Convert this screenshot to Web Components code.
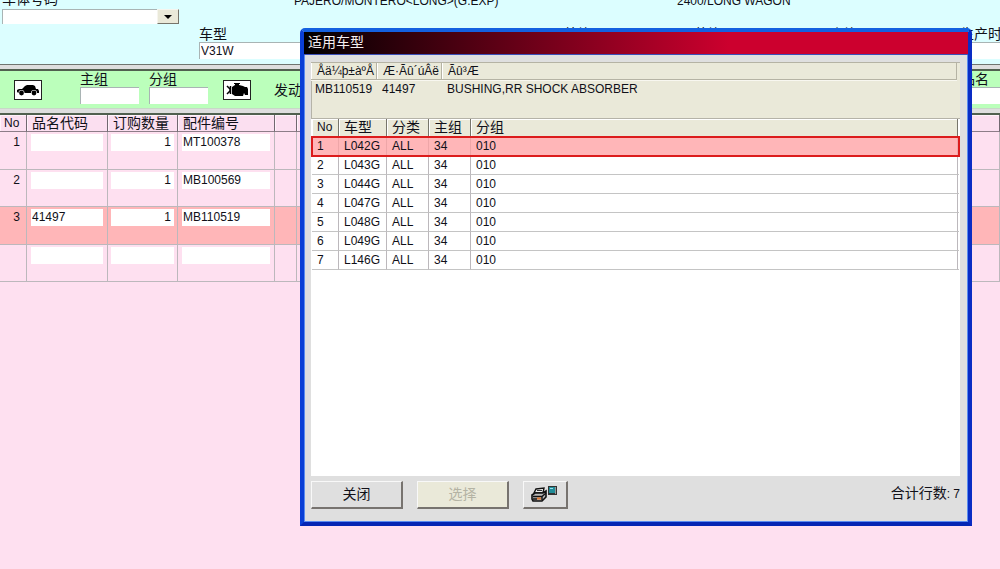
<!DOCTYPE html>
<html lang="zh-CN">
<head>
<meta charset="utf-8">
<title>适用车型</title>
<style>
  html, body { height: 100%; }
  body {
    margin: 0; overflow: hidden; background: #fee0f0; color: #101018;
    font: 12px/16px "Liberation Sans", "Noto Sans CJK SC", sans-serif;
    --cjk: 14px/16px "Liberation Sans", "Noto Sans CJK SC", sans-serif;
    --sand: #eae9d9; --silver: #dfdfdf; --rule: #bcb8bc;
  }
</style>
</head>
<body>
<parts-app></parts-app>
<script>
const define = (name, html, setup) => {
  const template = document.createElement('template');
  template.innerHTML = html;
  customElements.define(name, class extends HTMLElement {
    constructor() {
      super();
      this.attachShadow({ mode: 'open' }).append(template.content.cloneNode(true));
    }
    connectedCallback() { if (setup) setup(this, this.shadowRoot); }
  });
};

define('labelled-field', `
  <style>
    :host { display: block; min-width: 0; }
    label { display: block; font: var(--cjk); height: 16px; white-space: nowrap; }
    input { display: block; box-sizing: border-box; width: 100%; height: 17px; margin: 0; padding: 0 1px;
      border: solid #a9b4b4; border-width: 1px 0 0 1px; border-radius: 0; background: #fff; font: inherit; color: inherit; }
  </style>
  <label for="f"></label><input id="f" type="text">`,
  (host, root) => {
    root.querySelector('label').textContent = host.getAttribute('label');
    root.querySelector('input').value = host.getAttribute('value') || '';
  });

define('vehicle-panel', `
  <style>
    :host { display: block; height: 64px; overflow: hidden; background: #dcfeff; }
    .top { display: grid; grid-template-columns: 292px 383px 1fr; margin-top: -9px; padding-left: 2px; white-space: nowrap; }
    .top label { font: var(--cjk); }
    .top span { padding-top: 2px; }
    .combo { position: relative; width: 177px; height: 15px; margin-left: 2px; }
    select { appearance: none; display: block; box-sizing: border-box; width: 100%; height: 100%; margin: 0; padding: 0;
      border: solid #a9b4b4; border-width: 1px 0 0 1px; border-radius: 0; background: #fff; font: inherit; }
    .arrow { position: absolute; right: 0; top: 0; width: 22px; height: 15px; box-sizing: border-box; pointer-events: none;
      background: var(--sand); border: 1px solid; border-color: #f6f5ee #77746a #77746a #f6f5ee; display: grid; place-items: center; }
    .row { display: grid; grid-template-columns: 151fr 214fr 130fr 136fr 130fr 40px; margin: 2px 0 0 199px; }
  </style>
  <div class="top"><label for="vin">车体号码</label><span>PAJERO/MONTERO&lt;LONG&gt;(G.EXP)</span><span>2400/LONG WAGON</span></div>
  <div class="combo"><select id="vin"><option></option></select>
    <span class="arrow"><svg width="8" height="4"><path d="M0 0H8L4 4Z"/></svg></span></div>
  <div class="row">
    <labelled-field label="车型" value="V31W"></labelled-field>
    <labelled-field label=""></labelled-field>
    <labelled-field label="外饰"></labelled-field>
    <labelled-field label="装饰"></labelled-field>
    <labelled-field label="内饰"></labelled-field>
    <labelled-field label="生产时间"></labelled-field>
  </div>`);

define('split-bar', `
  <style>:host { display: block; box-sizing: border-box; height: 7px; background: #dedede;
    border-top: 1px solid var(--top, #707570); border-bottom: 2px solid #50604f; }</style>`);

define('group-bar', `
  <style>
    :host { display: flex; align-items: flex-start; height: 37px; box-sizing: border-box; padding-left: 14px; background: #bbffbb; }
    button { flex: none; width: 28px; height: 20px; margin: 9px 0 0; padding: 0; border: 1px solid #222; border-radius: 0;
      background: #fff; display: grid; place-items: center; }
    labelled-field { flex: none; width: 59px; margin-right: 10px; }
    .first { margin-left: 38px; }
    .engine { margin-left: 5px; margin-right: 23px; }
    .text { font: var(--cjk); margin-top: 11px; flex: 1; white-space: nowrap; }
    .last { width: 39px; margin: 0; }
  </style>
  <button aria-label="车型"><svg width="24" height="14" viewBox="0 0 24 14"><path d="M1 9V7L3 6H6L9 3L11 2H17L19 3L20 6L22 6L23 8V10H21A3 3 0 0 0 15 10H8.500A3 3 0 0 0 2.500 10Z"/><circle cx="5.500" cy="10" r="2.400"/><circle cx="18" cy="10" r="2.400"/></svg></button>
  <labelled-field class="first" label="主组"></labelled-field>
  <labelled-field label="分组"></labelled-field>
  <button class="engine" aria-label="发动机"><svg width="24" height="16" viewBox="0 0 24 16"><path d="M7 5L10 3V2H9V1H15V2H14V3L18 4L20 5H22L23 7V13H20L19 11L18 14H10L7 12Z"/><path d="M2 4L5 7V9L2 12M5.500 4V12" fill="none" stroke="#000" stroke-width="1.500"/></svg></button>
  <span class="text">发动机</span>
  <labelled-field class="last" label="品名"></labelled-field>`);

define('order-table', `
  <style>
    :host { display: block; }
    table { width: 100%; border-collapse: separate; border-spacing: 0; table-layout: fixed; }
    th { box-sizing: border-box; height: 17px; padding: 0 0 0 5px; text-align: left; font: var(--cjk); white-space: nowrap;
      background: #fbdff0; border-right: 1px solid #706870; border-bottom: 1px solid #8d7d88; box-shadow: inset 1px 1px #fff2fa; }
    th:first-child { font: inherit; padding-left: 4px; }
    td { box-sizing: border-box; height: 37px; padding: 2px 4px 0; vertical-align: top; border-right: 1px solid var(--rule); border-bottom: 1px solid var(--rule); }
    tr:nth-child(odd) td { height: 38px; }
    td:first-child { text-align: right; padding: 2px 6px 0 0; }
    td:nth-child(3) { padding: 2px 3px 0; }
    input { display: block; box-sizing: border-box; width: 100%; height: 17px; margin: 0; padding: 0 1px 1px; border: 0; border-radius: 0;
      background: #fff; font: inherit; color: inherit; }
    .qty { text-align: right; padding-right: 3px; }
    .on { background: #ffb6b8; }
  </style>
  <table>
    <colgroup><col style="width:27px"><col style="width:81px"><col style="width:70px"><col style="width:97px"><col style="width:22px"><col></colgroup>
    <thead><tr><th>No</th><th>品名代码</th><th>订购数量</th><th>配件编号</th><th></th><th></th></tr></thead>
    <tbody></tbody>
  </table>`,
  (host, root) => {
    const rows = [['1', '', '1', 'MT100378'], ['2', '', '1', 'MB100569'], ['3', '41497', '1', 'MB110519'], ['', '', '', '']];
    root.querySelector('tbody').innerHTML = rows.map(([no, code, qty, part]) =>
      `<tr class="${no === '3' ? 'on' : ''}"><td>${no}</td><td><input aria-label="品名代码" value="${code}"></td>` +
      `<td><input class="qty" aria-label="订购数量" value="${qty}"></td><td><input aria-label="配件编号" value="${part}"></td><td></td><td></td></tr>`).join('');
  });

define('app-window', `
  <style>
    :host { display: flex; flex-direction: column; box-sizing: border-box; background: var(--silver);
      border: 4px solid #0a3fd6; border-top-color: #1460e0; border-right-color: #0a2cc4; border-bottom-color: #0526b4;
      border-radius: 5px 5px 0 0; box-shadow: inset 0 0 0 1px #5a8cf0; }
    h1 { flex: none; margin: 0; padding: 0 4px; font: var(--cjk); line-height: 20px; height: 22px; color: #f4eef0;
      background: linear-gradient(90deg, #000, #cc002e 64%); border-bottom: 1px solid #3c50b8; }
    .body { flex: 1; display: flex; flex-direction: column; min-height: 0; padding: 7px 8px 13px 7px; }
  </style>
  <h1><slot name="title"></slot></h1><div class="body"><slot></slot></div>`);

define('part-info', `
  <style>
    :host { display: block; flex: none; height: 56px; background: var(--sand); box-shadow: inset 1px 1px #b5b3a8; padding-right: 3px; }
    table { width: 100%; border-spacing: 0; table-layout: fixed; }
    th { box-sizing: border-box; height: 18px; padding: 0 0 0 6px; text-align: left; font-weight: normal; white-space: nowrap;
      border: solid #b5b3a4; border-width: 1px 1px 1px 0; box-shadow: inset 1px 0 #fff, 0 1px #f8f7f0; }
    td { height: 16px; padding: 1px 0 0 5px; white-space: nowrap; }
    td:first-child { padding-left: 4px; }
  </style>
  <table>
    <colgroup><col style="width:66px"><col style="width:65px"><col></colgroup>
    <thead><tr><th>Åä¼þ±àºÅ</th><th>Æ·Ãû´úÂë</th><th>Ãû³Æ</th></tr></thead>
    <tbody><tr><td>MB110519</td><td>41497</td><td>BUSHING,RR SHOCK ABSORBER</td></tr></tbody>
  </table>`);

define('model-table', `
  <style>
    :host { display: block; flex: 1; min-height: 0; background: #fff; border-top: 1px solid #b5b3a8; padding: 0 1px; }
    table { width: 100%; border-spacing: 0; table-layout: fixed; }
    th { box-sizing: border-box; height: 18px; padding: 0 0 1px 5px; text-align: left; font: var(--cjk); background: var(--sand); white-space: nowrap;
      border-right: 1px solid #77756b; border-bottom: 1px solid #9c9a8e; box-shadow: inset 1px 1px #fff; }
    th:first-child { font: inherit; }
    td { box-sizing: border-box; height: 19px; padding: 0 0 0 5px; border-right: 1px solid var(--rule); border-bottom: 1px solid #c4c4c4; white-space: nowrap; }
    .end { border-right: 0; background: none; box-shadow: none; padding: 0; }
    th.end { border-bottom: 0; }
    .on td { background: #ffb6b8; border-right-color: #eea6a8; }
    .on { outline: 2px solid #dc1c1c; outline-offset: -1px; }
  </style>
  <table>
    <colgroup><col style="width:27px"><col style="width:48px"><col style="width:42px"><col style="width:42px"><col><col style="width:1px"></colgroup>
    <thead><tr><th>No</th><th>车型</th><th>分类</th><th>主组</th><th>分组</th><th class="end"></th></tr></thead>
    <tbody></tbody>
  </table>`,
  (host, root) => {
    root.querySelector('tbody').innerHTML = ['L042G', 'L043G', 'L044G', 'L047G', 'L048G', 'L049G', 'L146G'].map((model, i) =>
      `<tr class="${i ? '' : 'on'}"><td>${i + 1}</td><td>${model}</td><td>ALL</td><td>34</td><td>010</td><td class="end"></td></tr>`).join('');
  });

define('bevel-button', `
  <style>
    :host { display: block; width: 92px; }
    :host([icon]) { width: 45px; }
    button { display: grid; place-items: center; box-sizing: border-box; width: 100%; height: 28px; margin: 0; padding: 0 0 1px; font: var(--cjk); color: #101018;
      background: var(--silver); border: solid; border-width: 1px 2px 2px 1px; border-color: #f8f8f8 #77736f #77736f #f8f8f8; border-radius: 0; }
    button:disabled { background: var(--sand); color: #b4b3a4; }
  </style>
  <button><slot></slot></button>`,
  (host, root) => {
    const button = root.querySelector('button');
    button.disabled = host.hasAttribute('disabled');
    if (host.hasAttribute('icon')) button.setAttribute('aria-label', host.getAttribute('icon'));
  });

define('dialog-footer', `
  <style>
    :host { display: flex; flex: none; align-items: flex-start; gap: 14px; margin-top: 5px; }
    output { margin-left: auto; margin-top: 4px; font: var(--cjk); }
    small { font-size: 12px; }
    svg { display: block; }
  </style>
  <bevel-button>关闭</bevel-button>
  <bevel-button disabled>选择</bevel-button>
  <bevel-button icon="打印"><svg width="28" height="18" viewBox="0 0 28 18">
    <path d="M5 4L13 3L12 8H3Z" fill="#eee" stroke="#111" stroke-width="1.400"/><path d="M6 5.500H11M5 7.500H10" stroke="#333"/>
    <path d="M1 10L4 8H12L15 6V12L11 16H2L1 14Z" fill="#b8b8b8" stroke="#111" stroke-width="1.600"/><path d="M2 11.500H11L15 8M11 12V15M2 14H6" fill="none" stroke="#111" stroke-width="1.400"/><path d="M6 13.500H10" stroke="#e07830" stroke-width="2"/>
    <rect x="17" y="1" width="9" height="9" fill="#333"/><rect x="18" y="2" width="6" height="6" fill="#208c98"/><path d="M19 3.500H22" stroke="#9de"/><path d="M24.500 2V9" stroke="#999"/></svg></bevel-button>
  <output>合计行数<small>: 7</small></output>`);

define('parts-app', `
  <style>
    :host { display: block; position: relative; height: 100%; }
    .lower { --top: #c8d8c8; }
    app-window { position: absolute; left: 30%; right: 28px; top: 28px; height: 498px; }
  </style>
  <vehicle-panel></vehicle-panel>
  <split-bar></split-bar>
  <group-bar></group-bar>
  <split-bar class="lower"></split-bar>
  <order-table></order-table>
  <app-window role="dialog">
    <span slot="title">适用车型</span>
    <part-info></part-info>
    <model-table></model-table>
    <dialog-footer></dialog-footer>
  </app-window>`);
</script>
</body>
</html>
